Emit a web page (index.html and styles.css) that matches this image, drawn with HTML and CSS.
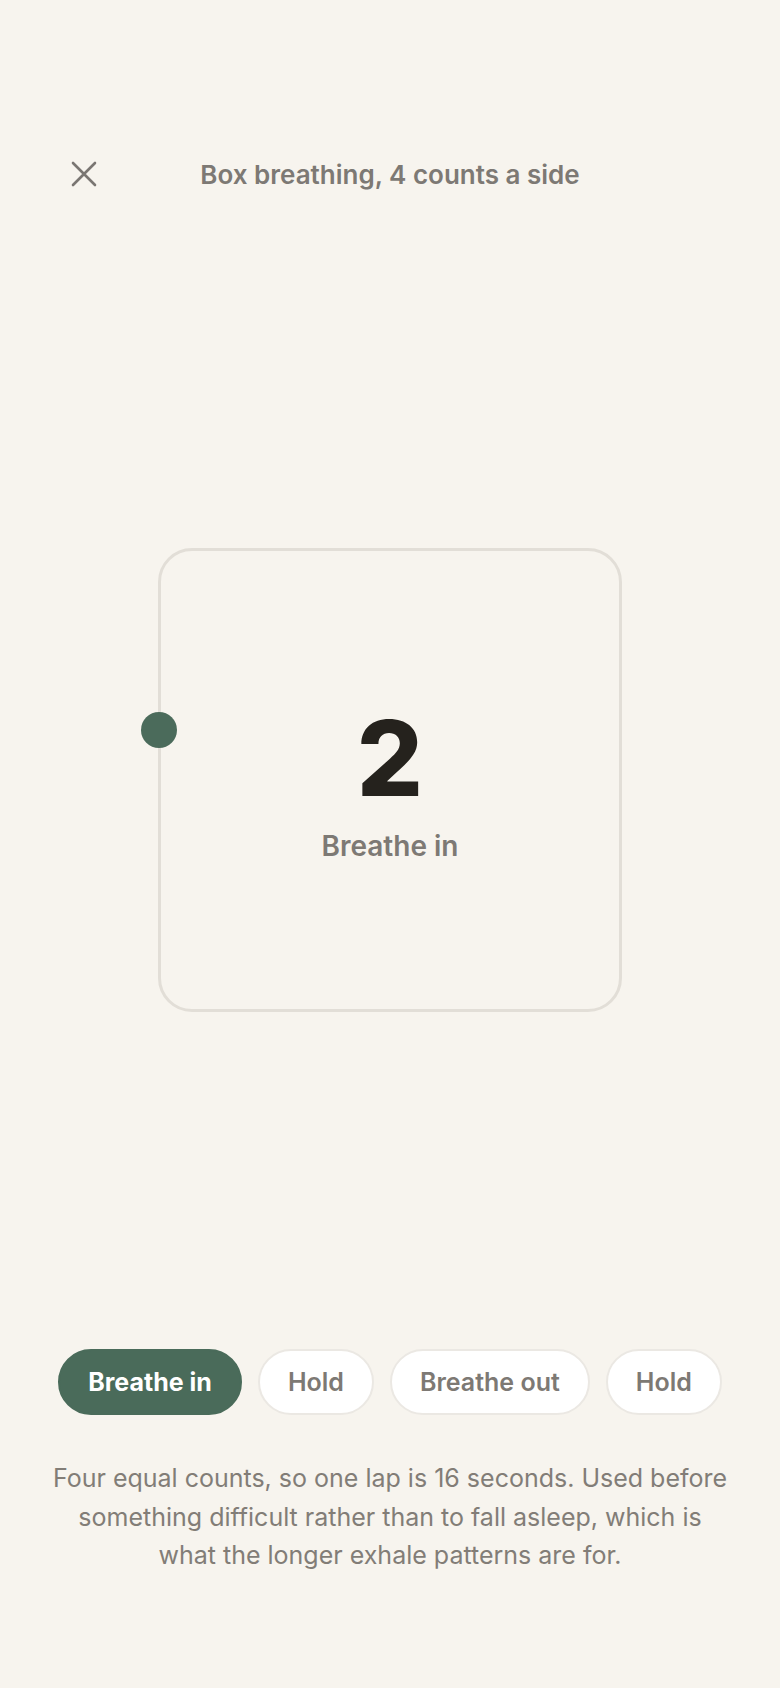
FILE: index.html
```html
<!DOCTYPE html>
<html lang="en">
<head>
<meta charset="utf-8">
<title>Box breathing</title>
<link rel="stylesheet" href="styles.css">
</head>
<body>
<div class="app">
  <header class="header">
    <button class="close" aria-label="Close">
      <svg width="26" height="26" viewBox="0 0 26 26" fill="none" stroke="currentColor" stroke-width="2.6" stroke-linecap="round"><path d="M2 2 L24 24 M24 2 L2 24"/></svg>
    </button>
    <h1 class="title">Box breathing, 4 counts a side</h1>
    <span class="spacer"></span>
  </header>
  <main class="stage">
    <div class="box">
      <span class="dot"></span>
      <div class="count">2</div>
      <div class="phase">Breathe in</div>
    </div>
  </main>
  <nav class="phases">
    <span class="chip active">Breathe in</span>
    <span class="chip">Hold</span>
    <span class="chip">Breathe out</span>
    <span class="chip">Hold</span>
  </nav>
  <p class="note">Four equal counts, so one lap is 16 seconds. Used before something difficult rather than to fall asleep, which is what the longer exhale patterns are for.</p>
</div>
</body>
</html>
```
FILE: styles.css
```css
* { box-sizing: border-box; }
html, body { margin: 0; padding: 0; }
body {
  background: #f7f4ee;
  font-family: Inter, "Noto Sans", sans-serif;
  color: #7d7974;
}
.app {
  width: 780px;
  height: 1688px;
  display: flex;
  flex-direction: column;
}
.header {
  margin-top: 148px;
  height: 52px;
  display: grid;
  grid-template-columns: 1fr auto 1fr;
  align-items: center;
}
.close {
  justify-self: start;
  margin-left: 71px;
  padding: 0;
  border: 0;
  background: none;
  color: #7a7672;
  width: 26px;
  height: 26px;
  display: flex;
}
.title {
  margin: 0;
  font-size: 26px;
  font-weight: 600;
  color: #7d7974;
  letter-spacing: 0;
}
.stage {
  padding-top: 348px;
  display: flex;
  justify-content: center;
}
.box {
  position: relative;
  width: 464px;
  height: 464px;
  border: 3px solid #e2ded7;
  border-radius: 34px;
  display: flex;
  flex-direction: column;
  align-items: center;
  justify-content: center;
  padding-top: 9px;
}
.dot {
  position: absolute;
  left: -20.5px;
  top: 161px;
  width: 36px;
  height: 36px;
  border-radius: 50%;
  background: #4b6b5b;
}
.count {
  font-size: 104px;
  font-weight: 800;
  line-height: 1;
  color: #25221d;
}
.phase {
  margin-top: 20px;
  font-size: 28px;
  font-weight: 600;
  line-height: 1.2;
  color: #7d7974;
}
.phases {
  margin-top: 337px;
  display: flex;
  justify-content: center;
  gap: 16px;
}
.chip {
  height: 66px;
  padding: 0 28px;
  border-radius: 33px;
  background: #fff;
  border: 2px solid #ebe8e3;
  display: flex;
  align-items: center;
  font-size: 25px;
  font-weight: 600;
  color: #7d7974;
}
.chip.active {
  background: #4a6b5a;
  border-color: #4a6b5a;
  color: #fff;
  font-weight: 700;
}
.note {
  margin: 44px 0 0;
  padding: 0 50px;
  text-align: center;
  font-size: 25px;
  line-height: 38.5px;
  font-weight: 400;
  color: #827d77;
}
```
